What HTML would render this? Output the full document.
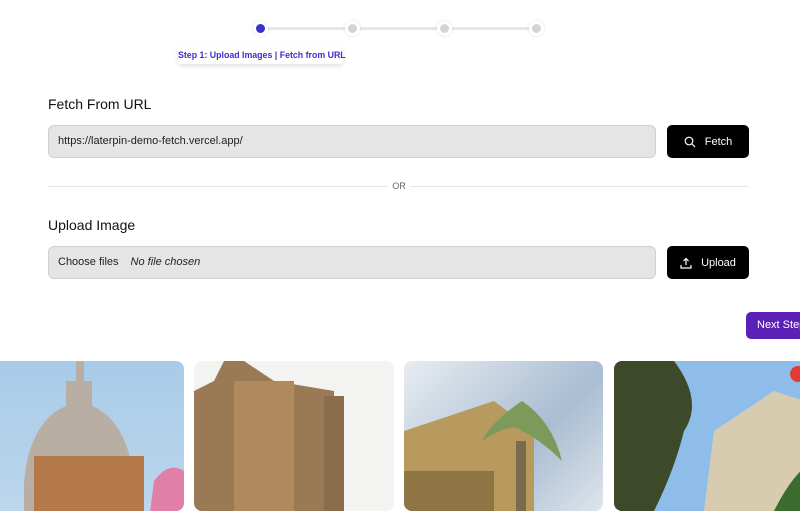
<!DOCTYPE html>
<html><head><style>
*{box-sizing:border-box;margin:0;padding:0}
body{width:800px;height:500px;overflow:hidden;background:#fff;font-family:"Liberation Sans",sans-serif;position:relative;color:#111}
.abs{position:absolute}
.line{position:absolute;top:27px;height:3px;background:#e5e7eb}
.dot{position:absolute;top:21px;width:15px;height:15px;border-radius:50%;background:#fff;box-shadow:0 0 3px rgba(0,0,0,.12)}
.dot i{position:absolute;left:3px;top:3px;width:9px;height:9px;border-radius:50%;background:#d1d5db}
.h{position:absolute;left:48px;font-size:14px;color:#111}
.inp{position:absolute;left:48px;width:608px;height:33px;background:#e5e5e5;border:1px solid #d0d0d0;border-radius:6px;font-size:11px;color:#222;line-height:31px;padding-left:9px}
.btn{position:absolute;left:667px;width:82px;height:33px;background:#000;border-radius:5px;color:#fff;font-size:11px;display:flex;align-items:center;justify-content:center;gap:9px}
.card{position:absolute;top:361px;height:150px;border-radius:8px;overflow:hidden}
</style></head><body>
<div class="line" style="left:262px;width:276px"></div>
<div class="dot" style="left:253px"><i style="background:#3b2fc9"></i></div>
<div class="dot" style="left:345px"><i></i></div>
<div class="dot" style="left:437px"><i></i></div>
<div class="dot" style="left:529px"><i></i></div>
<div class="abs" style="left:178px;top:46px;width:165px;height:18px;background:#fff;box-shadow:0 2px 5px rgba(0,0,0,.12);border-radius:3px;font-size:8.8px;font-weight:bold;color:#3b2fc9;line-height:18px;text-align:center;white-space:nowrap">Step 1: Upload Images | Fetch from URL</div>

<div class="h" style="top:96px">Fetch From URL</div>
<div class="inp" style="top:125px">https://laterpin-demo-fetch.vercel.app/</div>
<div class="btn" style="top:125px"><svg width="12" height="12" viewBox="0 0 12 12" fill="none" stroke="#fff" stroke-width="1.2"><circle cx="5" cy="5" r="3.8"/><path d="M8 8l3 3"/></svg>Fetch</div>

<div class="abs" style="left:48px;top:186px;width:340px;height:1px;background:#e5e5e5"></div>
<div class="abs" style="left:410px;top:186px;width:339px;height:1px;background:#e5e5e5"></div>
<div class="abs" style="left:388px;top:181px;width:22px;font-size:9px;color:#666;text-align:center">OR</div>

<div class="h" style="top:217px">Upload Image</div>
<div class="inp" style="top:246px">Choose files<span style="font-style:italic;margin-left:12px">No file chosen</span></div>
<div class="btn" style="top:246px"><svg width="12" height="12" viewBox="0 0 12 12" fill="none" stroke="#fff" stroke-width="1.2"><path d="M6 8V1.5M3.5 4L6 1.5 8.5 4M1 8v3h10V8"/></svg>Upload</div>

<div class="abs" style="left:746px;top:312px;width:70px;height:27px;background:#5b21b6;border-radius:5px;color:#fff;font-size:11px;line-height:27px;padding-left:11px;white-space:nowrap">Next Step</div>

<div class="card" style="left:-16px;width:200px;background:linear-gradient(#a9cbe8,#bcd6ec)">
<svg width="200" height="150"><path d="M92 0h8v20h8v25c25 10 40 40 42 80v30H40v-30c2-40 17-70 42-80V20h10z" fill="#b9aea3"/><path d="M50 95h110v60H50z" fill="#b57a4a"/><path d="M170 120q15-20 30-10v50h-35z" fill="#e07fa8"/></svg></div>
<div class="card" style="left:194px;width:200px;background:#f3f3f1">
<svg width="200" height="150"><path d="M0 30l20-10 10-20h20l30 20 60 10v120H0z" fill="#9a7a55"/><path d="M40 20h60v130H40z" fill="#b08a5c"/><path d="M130 35h20v115h-20z" fill="#8a6d4b"/></svg></div>
<div class="card" style="left:404px;width:199px;background:linear-gradient(135deg,#e8ecf0,#a9bdd3 60%,#dfe5eb)">
<svg width="199" height="150"><path d="M0 70l60-20 30-10 40 30v80H0z" fill="#b89a5e"/><path d="M0 110h90v40H0z" fill="#8f7444"/><path d="M118 40q-30 20-40 40 30-20 40-10 20 10 40 30-10-40-40-60z" fill="#7e9a5a"/><path d="M112 80h10v70h-10z" fill="#7a6a4e"/></svg></div>
<div class="card" style="left:614px;width:200px;background:#8dbde8">
<svg width="200" height="150"><path d="M0 0h60q30 40 10 70-10 40-30 80H0z" fill="#3d4a2a"/><path d="M100 70l60-40 30 10v110H90z" fill="#d8ccb0"/><path d="M160 150q20-40 40-50v50z" fill="#3c6b2e"/></svg></div>
<div class="abs" style="left:790px;top:366px;width:16px;height:16px;border-radius:50%;background:#e53935"></div>
</body></html>
